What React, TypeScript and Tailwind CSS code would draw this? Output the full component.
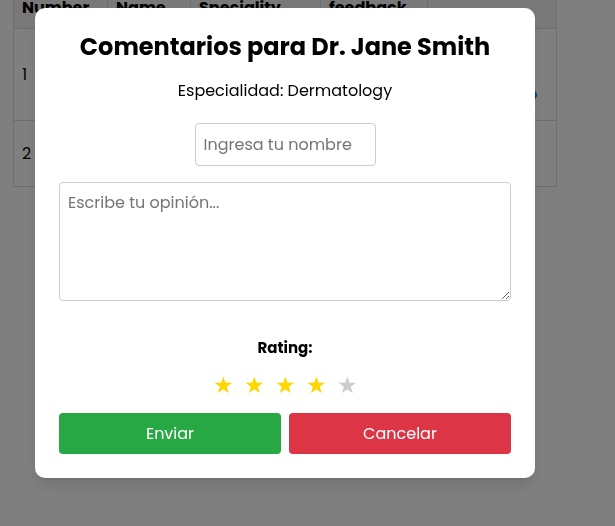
import { useState } from "react";

const doctors = [
  { id: 1, name: "", speciality: "", feedback: "" },
  { id: 2, name: "", speciality: "", feedback: "" },
];

function Star({ filled }: { filled: boolean }) {
  return (
    <span className={`text-[23px] leading-none ${filled ? "text-[#ffd700]" : "text-[#cccccc]"}`}>
      ★
    </span>
  );
}

export default function App() {
  const [rating, setRating] = useState(4);

  return (
    <div className="relative min-h-[526px] bg-white font-['Poppins','Open_Sans',sans-serif] text-black">
      <table className="ml-[13px] -mt-[14px] border-collapse text-base">
        <thead>
          <tr className="h-[42px] bg-[#f2f2f2] text-left">
            <th className="w-[94px] border border-[#dddddd] px-2 font-bold">Number</th>
            <th className="w-[83px] border border-[#dddddd] px-2 font-bold">Name</th>
            <th className="w-[130px] border border-[#dddddd] px-2 font-bold">Speciality</th>
            <th className="w-[107px] border border-[#dddddd] px-2 font-bold">feedback</th>
            <th className="w-[129px] border border-[#dddddd] px-2"></th>
          </tr>
        </thead>
        <tbody>
          {doctors.map((d, i) => (
            <tr key={d.id} className={i === 0 ? "h-[92px]" : "h-[66px]"}>
              <td className="border border-[#dddddd] px-2">{d.id}</td>
              <td className="border border-[#dddddd] px-2">{d.name}</td>
              <td className="border border-[#dddddd] px-2">{d.speciality}</td>
              <td className="border border-[#dddddd] px-2">{d.feedback}</td>
              <td className="border border-[#dddddd] px-2">
                {i === 0 && (
                  <div className="mt-[40px] flex justify-end pr-[11px]">
                    <span className="h-[10px] w-[60px] rounded-full bg-[#007bff]" />
                  </div>
                )}
              </td>
            </tr>
          ))}
        </tbody>
      </table>

      <div className="fixed inset-0 bg-black/50 pl-[35px] pt-[8px]">
        <div className="flex w-[500px] flex-col items-center rounded-[10px] bg-white px-6 pb-6 pt-[20px] shadow-lg">
          <h2 className="text-[24px] font-bold leading-[38px]">Comentarios para Dr. Jane Smith</h2>
          <p className="mt-[13px] text-base leading-6">Especialidad: Dermatology</p>
          <input
            className="mt-[20px] h-[43px] w-[181px] rounded border border-[#cccccc] px-2 text-base outline-none placeholder:text-[#757575]"
            placeholder="Ingresa tu nombre"
          />
          <textarea
            className="mt-4 h-[119px] w-full resize-y rounded border border-[#cccccc] px-2 py-2 text-base outline-none placeholder:text-[#757575]"
            placeholder="Escribe tu opinión..."
          />
          <p className="mt-[35px] text-[15px] font-bold leading-6">Rating:</p>
          <div className="mt-[14px] flex gap-[10px]">
            {[1, 2, 3, 4, 5].map((n) => (
              <button key={n} onClick={() => setRating(n)}>
                <Star filled={n <= rating} />
              </button>
            ))}
          </div>
          <div className="mt-[13px] flex w-full gap-2">
            <button className="h-[41px] flex-1 rounded bg-[#28a745] text-base text-white">Enviar</button>
            <button className="h-[41px] flex-1 rounded bg-[#dc3545] text-base text-white">Cancelar</button>
          </div>
        </div>
      </div>
    </div>
  );
}
